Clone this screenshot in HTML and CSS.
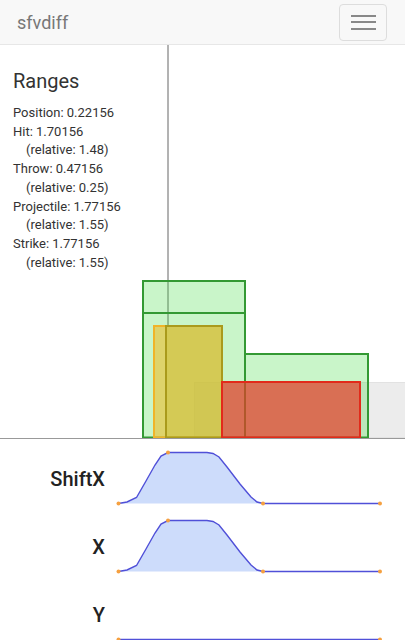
FILE: index.html
```html
<!DOCTYPE html>
<html lang="en">
<head>
    <meta charset="UTF-8">
    <meta name="viewport" content="width=device-width, initial-scale=1.0">
    <title>sfvdiff</title>
    <link rel="stylesheet" href="styles.css">
</head>
<body>

    <header class="navbar">
        <span class="brand">sfvdiff</span>
        <button class="toggle" aria-label="Menu">
            <span class="icon-bar"></span>
            <span class="icon-bar"></span>
            <span class="icon-bar"></span>
        </button>
    </header>

    <section class="stage">
        <!-- hitbox view -->
        <svg class="hitboxes" width="405" height="394" viewBox="0 0 405 394">
            <rect class="box-push" x="194.5" y="337.5" width="220" height="55"/>
            <line class="cursor" x1="168" y1="0" x2="168" y2="281"/>
            <rect class="box-hurt" x="143" y="236" width="102" height="32"/>
            <rect class="box-hurt" x="143" y="268" width="102" height="124.5"/>
            <rect class="box-hurt" x="245" y="309" width="123" height="83.5"/>
            <rect class="box-throw" x="154" y="281" width="68" height="111.5"/>
            <rect class="box-throw inner" x="166" y="281" width="56" height="111.5"/>
            <rect class="box-hit" x="222" y="337" width="138" height="55.5"/>
            <line class="ground" x1="0" y1="393.5" x2="405" y2="393.5"/>
        </svg>

        <div class="ranges">
            <h2>Ranges</h2>
            <ul>
                <li>Position: 0.22156</li>
                <li>Hit: 1.70156</li>
                <li class="rel">(relative: 1.48)</li>
                <li>Throw: 0.47156</li>
                <li class="rel">(relative: 0.25)</li>
                <li>Projectile: 1.77156</li>
                <li class="rel">(relative: 1.55)</li>
                <li>Strike: 1.77156</li>
                <li class="rel">(relative: 1.55)</li>
            </ul>
        </div>
    </section>

    <section class="tracks">
        <div class="track">
            <div class="track-label">ShiftX</div>
            <svg class="curve" width="270" height="68" viewBox="0 0 270 68">
                <path class="area" d="M3.5 64.5 L12 63 L21.5 58.5 L31 42 L40 26 L46 17 L53 13.5 L92 13.5 L98 14.5 L104 18 L112 28 L125 45 L136 58 L142 63 L148 64.5 Z"/>
                <path class="stroke" d="M3.5 64.5 L12 63 L21.5 58.5 L31 42 L40 26 L46 17 L53 13.5 L92 13.5 L98 14.5 L104 18 L112 28 L125 45 L136 58 L142 63 L148 64.5 L265 64.5"/>
                <circle class="key" cx="3.5" cy="64.5" r="2"/>
                <circle class="key" cx="53" cy="13.5" r="2"/>
                <circle class="key" cx="148" cy="64.5" r="2"/>
                <circle class="key" cx="265" cy="64.5" r="2"/>
            </svg>
        </div>
        <div class="track">
            <div class="track-label">X</div>
            <svg class="curve" width="270" height="68" viewBox="0 0 270 68">
                <path class="area" d="M3.5 64.5 L12 63 L21.5 58.5 L31 42 L40 26 L46 17 L53 13.5 L92 13.5 L98 14.5 L104 18 L112 28 L125 45 L136 58 L142 63 L148 64.5 Z"/>
                <path class="stroke" d="M3.5 64.5 L12 63 L21.5 58.5 L31 42 L40 26 L46 17 L53 13.5 L92 13.5 L98 14.5 L104 18 L112 28 L125 45 L136 58 L142 63 L148 64.5 L265 64.5"/>
                <circle class="key" cx="3.5" cy="64.5" r="2"/>
                <circle class="key" cx="53" cy="13.5" r="2"/>
                <circle class="key" cx="148" cy="64.5" r="2"/>
                <circle class="key" cx="265" cy="64.5" r="2"/>
            </svg>
        </div>
        <div class="track">
            <div class="track-label">Y</div>
            <svg class="curve" width="270" height="68" viewBox="0 0 270 68">
                <path class="stroke" d="M3.5 64.5 L265 64.5"/>
                <circle class="key" cx="3.5" cy="64.5" r="2"/>
                <circle class="key" cx="265" cy="64.5" r="2"/>
            </svg>
        </div>
    </section>

</body>
</html>
```

FILE: styles.css
```css
body {
    font-family: Roboto, 'Noto Sans', sans-serif;
    margin: 0;
    background: #ffffff;
    color: #333333;
    overflow: hidden;
}

/* Top bar */
.navbar {
    height: 44px;
    background-color: #f8f8f8;
    border-bottom: 1px solid #e7e7e7;
    display: flex;
    align-items: center;
    justify-content: space-between;
    padding: 0 18px 0 17px;
}

.brand {
    font-size: 18px;
    color: #777777;
}

.toggle {
    width: 48px;
    height: 37px;
    padding: 0;
    background: transparent;
    border: 1px solid #dddddd;
    border-radius: 4px;
    display: flex;
    flex-direction: column;
    align-items: center;
    justify-content: center;
    gap: 4.5px;
}

.icon-bar {
    display: block;
    width: 25px;
    height: 2px;
    background-color: #888888;
}

/* Hitbox view */
.stage {
    position: relative;
    height: 394px;
}

.hitboxes {
    display: block;
}

.cursor {
    stroke: #666666;
    stroke-width: 1;
}

.ground {
    stroke: #999999;
    stroke-width: 1;
}

.box-push {
    fill: #ececec;
    stroke: #e2e2e2;
    stroke-width: 1;
}

.box-hurt {
    fill: rgba(60, 220, 60, 0.28);
    stroke: #339933;
    stroke-width: 2;
}

.box-throw {
    fill: rgba(236, 190, 50, 0.62);
    stroke: #f0b428;
    stroke-width: 2;
}

.box-throw.inner {
    fill: rgba(200, 190, 60, 0.45);
    stroke: #aa9a1c;
}

.box-hit {
    fill: rgba(230, 60, 40, 0.7);
    stroke: #e22a1a;
    stroke-width: 2;
}

.ranges {
    position: absolute;
    top: 0;
    left: 13px;
}

.ranges h2 {
    margin: 24px 0 11px;
    font-size: 20px;
    line-height: 24px;
    font-weight: 400;
    color: #333333;
}

.ranges ul {
    list-style: none;
    margin: 0;
    padding: 0;
    font-size: 13px;
    line-height: 18.7px;
}

.ranges .rel {
    padding-left: 13px;
}

/* Curve tracks */
.tracks {
    display: flex;
    flex-direction: column;
}

.track {
    display: flex;
    height: 68px;
}

.track-label {
    width: 105px;
    margin-top: 28px;
    font-size: 20px;
    line-height: 24px;
    font-weight: 500;
    color: #222222;
    text-align: right;
}

.curve {
    margin-left: 10px;
    display: block;
}

.area {
    fill: #cddcfb;
}

.stroke {
    fill: none;
    stroke: #5050d8;
    stroke-width: 1.4;
}

.key {
    fill: #f5a040;
}
```
